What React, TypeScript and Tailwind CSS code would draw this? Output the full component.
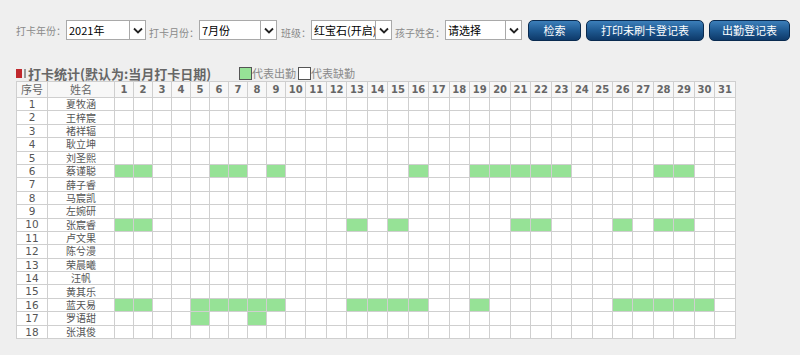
import React from 'react';

const cjk = { fontFamily: '"Noto Sans CJK SC", "Noto Sans", sans-serif' };

const students = [
  '夏牧涵', '王梓宸', '褚祥辐', '耿立坤', '刘圣熙', '蔡谨聪', '薛子睿', '马宸凯', '左婉研',
  '张宸睿', '卢文果', '陈兮漫', '荣晨曦', '汪帆', '黄其乐', '蓝天易', '罗语甜', '张淇俊',
];

// days marked present per student (1-based row index)
const present: Record<number, number[]> = {
  6: [1, 2, 6, 7, 9, 16, 19, 20, 21, 22, 23, 28, 29],
  10: [1, 2, 13, 15, 21, 22, 26, 28, 29],
  16: [1, 2, 5, 6, 7, 8, 9, 13, 14, 15, 16, 19, 26, 27, 28, 29, 30],
  17: [5, 8],
};

const days = Array.from({ length: 31 }, (_, i) => i + 1);

const Arrow = () => (
  <span className="flex h-full w-[16px] shrink-0 items-center justify-center border-l border-[#a9a9a9] bg-white">
    <svg width="10" height="7" viewBox="0 0 10 7">
      <path d="M1 1.5 L5 5.5 L9 1.5" fill="none" stroke="#222" strokeWidth="1.8" />
    </svg>
  </span>
);

const Select = ({ value, width }: { value: string; width: string }) => (
  <div className={`flex h-[20px] shrink-0 items-center border border-[#a9a9a9] bg-white ${width}`}>
    <span className="flex-1 overflow-hidden whitespace-nowrap pl-[2px] text-[11px] leading-[16px] text-black" style={cjk}>{value}</span>
    <Arrow />
  </div>
);

const Label = ({ children }: { children: React.ReactNode }) => (
  <span className="shrink-0 whitespace-nowrap text-[10px] text-[#8a8a8a]" style={cjk}>{children}</span>
);

const Button = ({ children, width }: { children: React.ReactNode; width: string }) => (
  <button
    className={`h-[21px] shrink-0 whitespace-nowrap rounded-[5px] border border-[#0a2b50] bg-gradient-to-b from-[#3c7fba] via-[#1f5a92] to-[#0e3a6a] text-[11px] leading-none text-white ${width}`}
    style={cjk}
  >
    {children}
  </button>
);

export default function App() {
  return (
    <div className="h-[355px] w-[800px] overflow-hidden bg-[#efefef] pl-[16px]" style={cjk}>
      <div className="flex items-center pt-[18px]">
        <Label>打卡年份：</Label>
        <div><Select value="2021年" width="w-[80px]" /></div>
        <div className="ml-[3px]"><Label>打卡月份：</Label></div>
        <div><Select value="7月份" width="w-[78px]" /></div>
        <div className="ml-[4px]"><Label>班级：</Label></div>
        <div><Select value="红宝石(开启)" width="w-[81px]" /></div>
        <div className="ml-[3px]"><Label>孩子姓名：</Label></div>
        <div><Select value="请选择" width="w-[77px]" /></div>
        <div className="ml-[6px] flex gap-[5px]">
          <Button width="w-[53px]">检索</Button>
          <Button width="w-[118px]">打印未刷卡登记表</Button>
          <Button width="w-[81px]">出勤登记表</Button>
        </div>
      </div>

      <div className="mt-[23px] flex h-[16px] items-center">
        <span className="h-[9px] w-[6px] bg-[#c0282d]" />
        <span className="ml-[2px] h-[9px] w-[2px] bg-[#999]" />
        <span className="ml-[2px] whitespace-nowrap text-[13px] font-bold leading-none text-[#666]">打卡统计(默认为:当月打卡日期)</span>
        <span className="ml-[28px] h-[13px] w-[13px] border border-[#555] bg-[#96e296]" />
        <span className="text-[11px] leading-none text-[#8a8a8a]">代表出勤</span>
        <span className="ml-[2px] h-[13px] w-[13px] border border-[#555] bg-white" />
        <span className="text-[11px] leading-none text-[#8a8a8a]">代表缺勤</span>
      </div>

      <table className="table-fixed border-collapse text-center" style={{ width: 719 }}>
        <colgroup>
          <col style={{ width: 31 }} />
          <col style={{ width: 67 }} />
          {days.map((d) => (
            <col key={d} style={{ width: d < 10 ? 19 : 20.45 }} />
          ))}
        </colgroup>
        <thead>
          <tr className="h-[16px] bg-[#f7f7f7]">
            <th className="border border-[#cfcfcf] p-0 text-[11px] font-normal leading-none text-[#666]">序号</th>
            <th className="border border-[#cfcfcf] p-0 text-[11px] font-normal leading-none text-[#666]">姓名</th>
            {days.map((d) => (
              <th
                key={d}
                className="border border-[#cfcfcf] p-0 text-[10px] font-bold leading-none text-[#666]"
                style={{ fontFamily: '"DejaVu Sans", sans-serif' }}
              >
                {d}
              </th>
            ))}
          </tr>
        </thead>
        <tbody className="bg-white">
          {students.map((name, i) => {
            const row = i + 1;
            const marks = present[row] || [];
            return (
              <tr key={row} className="h-[13.4px]">
                <td className="border border-[#cfcfcf] p-0 text-[10.5px] leading-none text-[#555]" style={{ fontFamily: '"DejaVu Sans", sans-serif' }}>{row}</td>
                <td className="border border-[#cfcfcf] p-0 text-[10px] leading-none text-[#555]">{name}</td>
                {days.map((d) => (
                  <td
                    key={d}
                    className={`border border-[#cfcfcf] p-0 ${marks.includes(d) ? 'bg-[#96e296]' : ''}`}
                  />
                ))}
              </tr>
            );
          })}
        </tbody>
      </table>
    </div>
  );
}
